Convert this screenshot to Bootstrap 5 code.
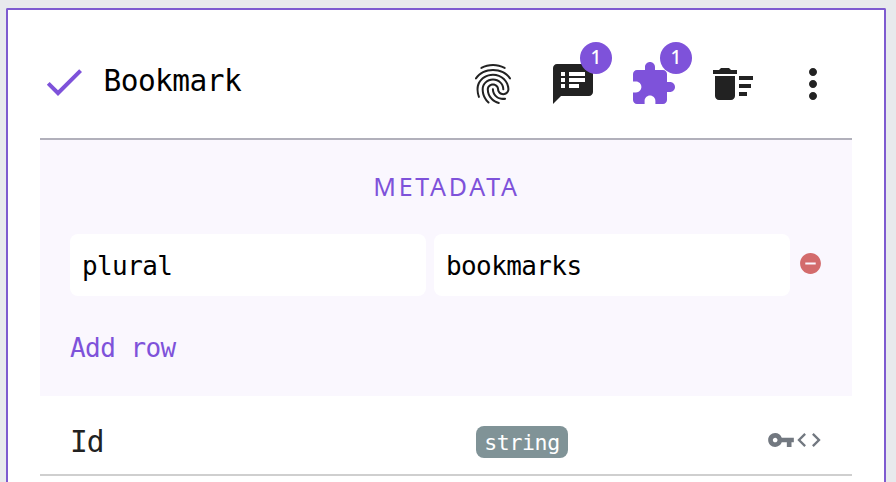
<!DOCTYPE html>
<html lang="en">
<head>
<meta charset="utf-8">
<meta name="viewport" content="width=device-width, initial-scale=1">
<title>Bookmark</title>
<link href="https://cdn.jsdelivr.net/npm/bootstrap@5.3.0/dist/css/bootstrap.min.css" rel="stylesheet">
<style>
:root{--violet:#7e52da}
body{background:#e8eaed;font-family:"DejaVu Sans Mono",monospace;color:#000;padding:8px 10px 0 6px}
svg{display:block;fill:currentColor;flex:none}
.model{height:calc(100vh - 8px);border:2px solid #7e5bd0;border-bottom:0;border-radius:2px 2px 0 0;padding:0 32px}
.model-head{height:130px;border-bottom:2px solid #b1b0bb;padding-top:16px}
.model-name{font-size:29.5px;letter-spacing:-.56px;line-height:40px;margin:-3px 0 0 15.5px}
.violet{color:var(--violet)}
.tools{gap:32px;color:#222;margin-right:15px;padding-top:4px}
.count{position:absolute;left:31px;top:-18px;width:32px;height:32px;background:var(--violet);color:#fff;font:500 19px/31px "Noto Sans",sans-serif;text-align:center}
.metadata{height:256px;background:#faf7fe;padding:29px 30px 0}
.metadata h2{font:25px/34px "Noto Sans",sans-serif;letter-spacing:2.7px;margin:0 -1px 31px 0}
.entry{gap:8px}
.field{width:356px;height:62px;flex:none;border-radius:8px;padding:2px 12px 0;background:#fff;font-size:26px;letter-spacing:-.6px}
.remove{margin:-4px 0 0 0}
.add{font-size:26px;letter-spacing:-.55px;line-height:34px;margin-top:35px}
.attr{height:80px;border-bottom:2px solid #cfcfcf;padding:12px 30px 0;color:#222}
.attr-name{width:406px;font-size:29.5px;letter-spacing:-.9px;padding-top:3px}
.kind{width:92px;height:32px;border-radius:8px;background:#809397;color:#fff;font-size:21.5px;letter-spacing:-.35px;line-height:33px;margin-top:2px}
.flags{color:#727880;margin-right:-1px;margin-top:-3px}
</style>
</head>
<body class="overflow-hidden">
<main class="model bg-white">
  <header class="model-head d-flex align-items-center">
    <svg class="violet" width="48" height="48" viewBox="0 0 24 24"><path d="M9 16.17L4.83 12l-1.42 1.41L9 19 21 7l-1.41-1.41z"/></svg>
    <h1 class="model-name fw-normal">Bookmark</h1>
    <div class="tools d-flex ms-auto">
      <svg width="48" height="48" viewBox="0 0 24 24"><path d="M17.81 4.47c-.08 0-.16-.02-.23-.06C15.66 3.42 14 3 12.01 3c-1.98 0-3.86.47-5.57 1.41-.24.13-.54.04-.68-.2-.13-.24-.04-.55.2-.68C7.82 2.52 9.86 2 12.01 2c2.13 0 3.99.47 6.03 1.52.25.13.34.43.21.67-.09.18-.26.28-.44.28zM3.5 9.72c-.1 0-.2-.03-.29-.09-.23-.16-.28-.47-.12-.7.99-1.4 2.25-2.5 3.75-3.27C9.98 4.04 14 4.03 17.15 5.65c1.5.77 2.76 1.86 3.75 3.25.16.22.11.54-.12.7-.23.16-.54.11-.7-.12-.9-1.26-2.04-2.25-3.39-2.94-2.87-1.47-6.54-1.47-9.4.01-1.36.7-2.5 1.7-3.4 2.96-.08.14-.23.21-.39.21zm6.25 12.07c-.13 0-.26-.05-.35-.15-.87-.87-1.34-1.43-2.01-2.64-.69-1.23-1.05-2.73-1.05-4.34 0-2.97 2.54-5.39 5.66-5.39s5.66 2.42 5.66 5.39c0 .28-.22.5-.5.5s-.5-.22-.5-.5c0-2.42-2.09-4.39-4.66-4.39-2.57 0-4.66 1.97-4.66 4.39 0 1.44.32 2.77.93 3.85.64 1.15 1.08 1.64 1.85 2.42.19.2.19.51 0 .71-.11.1-.24.15-.37.15zm7.17-1.85c-1.19 0-2.24-.3-3.1-.89-1.49-1.01-2.38-2.65-2.38-4.39 0-.28.22-.5.5-.5s.5.22.5.5c0 1.41.72 2.74 1.94 3.56.71.48 1.54.71 2.54.71.24 0 .64-.03 1.04-.1.27-.05.53.13.58.41.05.27-.13.53-.41.58-.57.11-1.07.12-1.21.12zM14.91 22c-.04 0-.09-.01-.13-.02-1.59-.44-2.63-1.03-3.72-2.1-1.4-1.39-2.17-3.24-2.17-5.22 0-1.62 1.38-2.94 3.08-2.94 1.7 0 3.08 1.32 3.08 2.94 0 1.07.93 1.94 2.08 1.94s2.08-.87 2.08-1.94c0-3.77-3.25-6.83-7.25-6.83-2.84 0-5.44 1.58-6.61 4.03-.39.81-.59 1.76-.59 2.8 0 .78.07 2.01.67 3.61.1.26-.03.55-.29.64-.26.1-.55-.04-.64-.29-.49-1.31-.73-2.61-.73-3.96 0-1.2.23-2.29.68-3.24 1.33-2.79 4.28-4.6 7.51-4.6 4.55 0 8.25 3.51 8.25 7.83 0 1.62-1.38 2.94-3.08 2.94s-3.08-1.32-3.08-2.94c0-1.07-.93-1.94-2.08-1.94s-2.08.87-2.08 1.94c0 1.71.66 3.31 1.87 4.51.95.94 1.86 1.46 3.27 1.85.27.07.42.35.35.61-.05.23-.26.38-.47.38z"/></svg>
      <div class="position-relative">
        <svg width="48" height="48" viewBox="0 0 24 24"><path d="M20 2H4c-1.1 0-1.99.9-1.99 2L2 22l4-4h14c1.1 0 2-.9 2-2V4c0-1.1-.9-2-2-2zM8 14H6v-2h2v2zm0-3H6V9h2v2zm0-3H6V6h2v2zm7 6h-5v-2h5v2zm3-3h-8V9h8v2zm0-3h-8V6h8v2z"/></svg>
        <span class="count rounded-circle">1</span>
      </div>
      <div class="position-relative violet">
        <svg width="48" height="48" viewBox="0 0 24 24"><path d="M20.5 11H19V7c0-1.1-.9-2-2-2h-4V3.5C13 2.12 11.88 1 10.5 1S8 2.12 8 3.5V5H4c-1.1 0-1.99.9-1.99 2v3.8H3.5c1.49 0 2.7 1.21 2.7 2.7s-1.21 2.7-2.7 2.7H2V20c0 1.1.9 2 2 2h3.8v-1.5c0-1.49 1.21-2.7 2.7-2.7 1.49 0 2.7 1.21 2.7 2.7V22H17c1.1 0 2-.9 2-2v-4h1.5c1.38 0 2.5-1.12 2.5-2.5S21.88 11 20.5 11z"/></svg>
        <span class="count rounded-circle">1</span>
      </div>
      <svg width="48" height="48" viewBox="0 0 24 24"><path d="M15 16h4v2h-4zm0-8h7v2h-7zm0 4h6v2h-6zM3 18c0 1.1.9 2 2 2h6c1.1 0 2-.9 2-2V8H3v10zM14 5h-3l-1-1H6L5 5H2v2h12z"/></svg>
      <svg width="48" height="48" viewBox="0 0 24 24"><path d="M12 8c1.1 0 2-.9 2-2s-.9-2-2-2-2 .9-2 2 .9 2 2 2zm0 2c-1.1 0-2 .9-2 2s.9 2 2 2 2-.9 2-2-.9-2-2-2zm0 6c-1.1 0-2 .9-2 2s.9 2 2 2 2-.9 2-2-.9-2-2-2z"/></svg>
    </div>
  </header>
  <section class="metadata">
    <h2 class="violet text-center">METADATA</h2>
    <div class="entry d-flex align-items-center">
      <div class="field d-flex align-items-center">plural</div>
      <div class="field d-flex align-items-center">bookmarks</div>
      <svg class="remove" width="25" height="25" viewBox="0 0 24 24" color="#d36b6c"><path d="M12 2C6.48 2 2 6.48 2 12s4.48 10 10 10 10-4.48 10-10S17.52 2 12 2zm5 11H7v-2h10v2z"/></svg>
    </div>
    <div class="add violet">Add row</div>
  </section>
  <section class="attr d-flex align-items-center">
    <div class="attr-name">Id</div>
    <div class="kind text-center">string</div>
    <div class="flags d-flex ms-auto">
      <svg width="28" height="28" viewBox="0 0 24 24"><path d="M12.65 10C11.83 7.67 9.61 6 7 6c-3.31 0-6 2.69-6 6s2.69 6 6 6c2.61 0 4.83-1.67 5.65-4H17v4h4v-4h2v-4H12.65zM7 14c-1.1 0-2-.9-2-2s.9-2 2-2 2 .9 2 2-.9 2-2 2z"/></svg>
      <svg width="28" height="28" viewBox="0 0 24 24"><path d="M9.4 16.6L4.8 12l4.6-4.6L8 6l-6 6 6 6 1.4-1.4zm5.2 0l4.6-4.6-4.6-4.6L16 6l6 6-6 6-1.4-1.4z"/></svg>
    </div>
  </section>
</main>
<script src="https://cdn.jsdelivr.net/npm/bootstrap@5.3.0/dist/js/bootstrap.bundle.min.js"></script>
</body>
</html>
